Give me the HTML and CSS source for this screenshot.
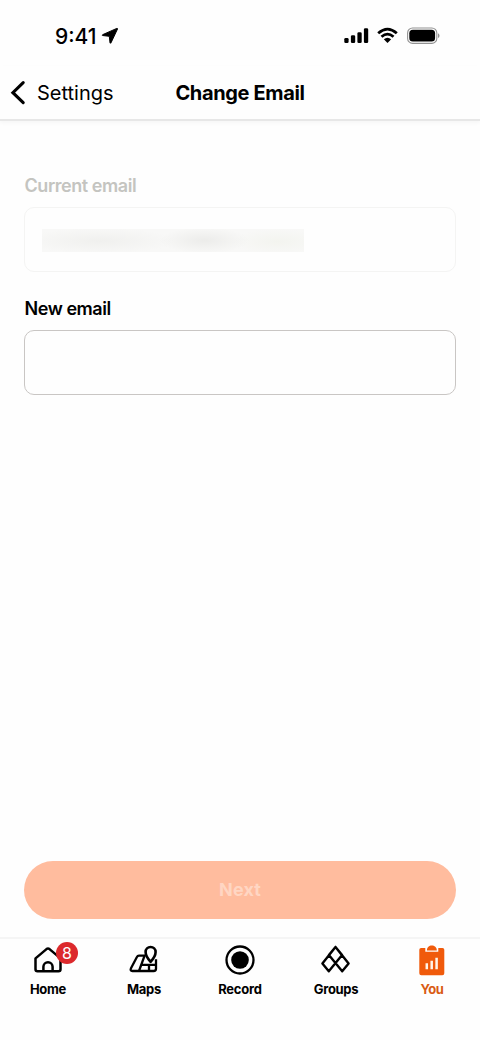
FILE: index.html
```html
<!DOCTYPE html>
<html lang="en">
<head>
<meta charset="utf-8">
<title>Change Email</title>
<link rel="stylesheet" href="styles.css">
</head>
<body>
<div class="screen">
  <div class="status">
    <div class="clock"><span class="time">9:41</span>
      <svg class="arrow" width="18" height="18" viewBox="0 0 18 18"><path d="M15.8 1.4 1.6 7.7Q.8 8.3 1.6 8.5L8.3 9.3 9 15.8Q9.5 16.8 10 15.8L16.5 2Q16.6 1.2 15.8 1.4Z" stroke="#000" stroke-width="1" stroke-linejoin="round"/></svg>
    </div>
    <div class="indicators">
      <svg width="25" height="18" viewBox="0 0 25 18"><rect x=".3" y="11" width="4.3" height="5" rx="1.3"/><rect x="6.9" y="8.3" width="4.3" height="7.7" rx="1.3"/><rect x="13.4" y="5.2" width="4.3" height="10.8" rx="1.3"/><rect x="19.9" y="1.3" width="4.3" height="14.7" rx="1.3"/></svg>
      <svg width="22" height="18" viewBox="0 0 22 18"><g fill="none" stroke="#000" stroke-width="2.8"><path d="M1.2 6.3Q10.5-2 19.8 6.3"/><path d="M4.5 9.8Q10.5 4.5 16.5 9.8"/></g><path d="M6.8 12.3Q10.5 9.3 14.2 12.3L10.5 16Z"/></svg>
      <svg width="33" height="18" viewBox="0 0 33 18"><rect x=".6" y="1" width="29.2" height="15.4" rx="5" fill="none" stroke="#929292" stroke-width="1.1"/><rect x="2.3" y="2.8" width="25.8" height="11.8" rx="3.5"/><path d="M31 6.3q1.5.8 1.5 2.4t-1.5 2.4z" fill="#929292"/></svg>
    </div>
  </div>
  <header class="nav">
    <a class="back">
      <svg width="16" height="26" viewBox="0 0 16 26"><path d="M13.2 2.7 2.9 12.7 13.2 22.7" fill="none" stroke="#000" stroke-width="3.1" stroke-linecap="round" stroke-linejoin="miter"/></svg>
      <span class="back-text">Settings</span>
    </a>
    <h1 class="title">Change Email</h1>
  </header>
  <main class="form">
    <div class="label muted">Current email</div>
    <div class="field disabled"><div class="redacted"></div></div>
    <div class="label second">New email</div>
    <div class="field"></div>
    <div class="next"><span class="next-text">Next</span></div>
  </main>
  <nav class="tabs">
    <div class="tab">
      <div class="icon">
        <svg width="32" height="32" viewBox="0 0 32 32"><g fill="none" stroke="#000" stroke-width="2.5" stroke-linejoin="round"><path d="M5.5 27.2Q3.5 27.2 3.5 25.2V14.4L14.5 5.1Q16 3.9 17.5 5.1L28.5 14.4V25.2Q28.5 27.2 26.5 27.2Z"/><path d="M11.4 27.2V22.8a4.6 4.6 0 0 1 9.2 0V27.2"/></g></svg>
        <span class="badge">8</span>
      </div>
      <span class="tab-text">Home</span>
    </div>
    <div class="tab">
      <div class="icon">
        <svg width="32" height="32" viewBox="0 0 32 32"><g fill="none" stroke="#000" stroke-width="2.3" stroke-linejoin="round"><path d="M17 11.7H11Q9.5 11.7 8.9 13L3 24.3Q1.8 27 4.4 27H25.6Q28 27 28 24.8V15.3"/><path d="M16.6 11.7 11 27M13.2 20.9H28M21 20.9V27"/><path d="M22.6 17.8C20.2 15.2 17.6 11.6 17.6 8a5 5 0 0 1 10 0C27.6 11.6 25 15.2 22.6 17.8Z" fill="#fefefe" stroke-width="2.6"/></g></svg>
      </div>
      <span class="tab-text">Maps</span>
    </div>
    <div class="tab">
      <div class="icon">
        <svg width="32" height="32" viewBox="0 0 32 32"><circle cx="16" cy="16" r="13.5" fill="none" stroke="#000" stroke-width="2.3"/><circle cx="16" cy="16" r="8.8"/></svg>
      </div>
      <span class="tab-text">Record</span>
    </div>
    <div class="tab">
      <div class="icon">
        <svg width="32" height="32" viewBox="0 0 32 32"><path d="M15.5 2.9 28.6 19.4 22.2 27.2 8.9 11ZM15.5 2.9 22.1 11 8.8 27.2 2.4 19.4Z" fill="none" stroke="#000" stroke-width="2.4" stroke-linejoin="round"/></svg>
      </div>
      <span class="tab-text">Groups</span>
    </div>
    <div class="tab active">
      <div class="icon">
        <svg width="32" height="32" viewBox="0 0 32 32"><path d="M5.1 4H9.3V7.7H22.3V4H26.5Q28.3 4 28.3 5.8V29.2Q28.3 31.2 26.3 31.2H5.3Q3.3 31.2 3.3 29.2V5.8Q3.3 4 5.1 4Z" fill="#f05a0b"/><path d="M10.9 6.4C10.9 3.5 13.2 1.6 15.8 1.6S20.8 3.5 20.8 6.4Z" fill="#f05a0b"/><path d="M10.8 19.2V25.3M15.7 16.7V25.3M20.6 13.8V25.3" stroke="#fff4e9" stroke-width="2.5"/></svg>
      </div>
      <span class="tab-text">You</span>
    </div>
  </nav>
</div>
</body>
</html>
```
FILE: styles.css
```css
* { box-sizing: border-box; }
body { margin: 0; background: #fefefe; font-family: Inter, "Liberation Sans", sans-serif; color: #000; }
svg { display: block; flex: none; }
.screen { width: 480px; height: 1040px; display: flex; flex-direction: column; overflow: hidden; }
.status { height: 66px; flex: none; padding: 27px 40px 0 55px; display: flex; justify-content: space-between; align-items: flex-start; }
.clock { display: flex; gap: 4px; height: 18px; align-items: center; }
.time { font-size: 21px; font-weight: 500; letter-spacing: 0; line-height: 18px; padding-top: 1px; }
.indicators { display: flex; gap: 8px; }
.nav { height: 55px; flex: none; display: grid; grid-template-columns: 144px 192px 144px; align-items: center; border-bottom: 2px solid #e7e7e7; box-shadow: 0 2px 4px #00000009; }
.back { display: flex; align-items: center; gap: 11px; padding-left: 10px; height: 26px; }
.back-text { font-size: 20px; letter-spacing: 0; white-space: nowrap; }
.title { margin: 0; text-align: center; font-size: 20px; font-weight: 700; letter-spacing: -0.35px; white-space: nowrap; }
.form { flex: 1; display: flex; flex-direction: column; align-items: stretch; padding: 53px 24px 18px; }
.label { font-size: 18px; font-weight: 600; line-height: 24px; height: 24px; margin-bottom: 9px; padding-left: 0.5px; letter-spacing: -0.45px; }
.muted { color: #c4c4c0; }
.second { margin-top: 25px; }
.field { height: 65px; border: 1.5px solid #c9c6c4; border-radius: 10px; padding: 21px 17px; }
.disabled { border-color: #f4f4f3; }
.redacted { width: 262px; height: 23px; background: radial-gradient(ellipse 45px 13px at 62% 50%, #ececea, transparent), radial-gradient(ellipse 75px 13px at 22% 52%, #f0f0ee, transparent), radial-gradient(ellipse 45px 13px at 90% 55%, #f3f4ef, transparent), #f8f8f7; }
.next { margin-top: auto; height: 58px; border-radius: 30px; background: #ffbc9e; display: flex; align-items: center; justify-content: center; }
.next-text { color: #ffd6c3; font-size: 18px; font-weight: 700; letter-spacing: 0.1px; padding-bottom: 2px; }
.tabs { height: 103px; flex: none; border-top: 2px solid #f5f5f5; padding-top: 5px; display: grid; grid-template-columns: repeat(5, 96px); }
.tab { display: flex; flex-direction: column; align-items: center; }
.icon { position: relative; width: 32px; height: 32px; }
.tab-text { font-size: 13px; line-height: 16px; font-weight: 700; margin-top: 5px; letter-spacing: -0.3px; }
.tab:nth-child(3) .tab-text { letter-spacing: -0.2px; }
.active { color: #d95b14; }
.badge { position: absolute; left: 24px; top: -2px; width: 22px; height: 22px; border-radius: 50%; background: #dc292c; color: #fff; font-size: 16px; line-height: 22px; text-align: center; }
```
